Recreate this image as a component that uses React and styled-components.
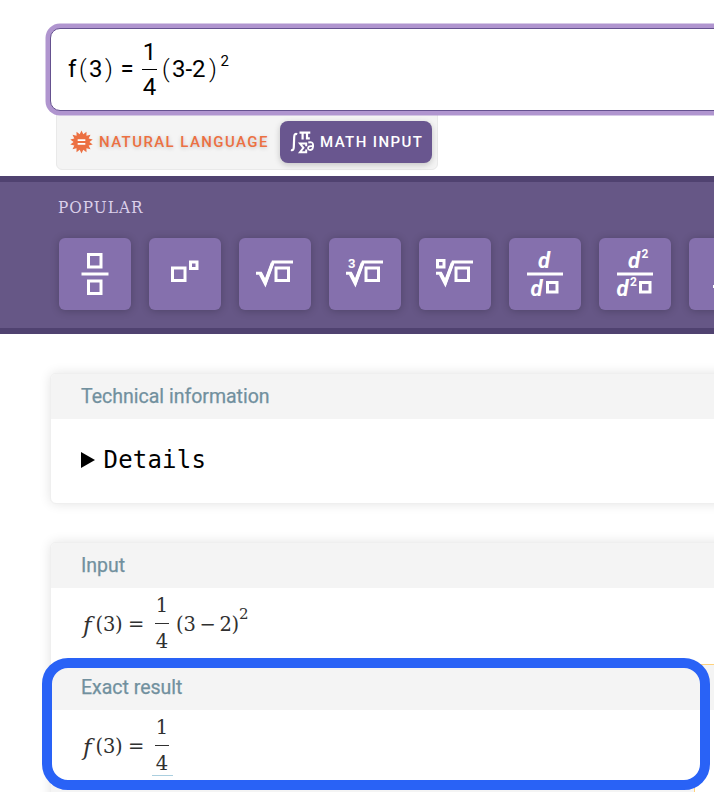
import React from "react";
import styled, { createGlobalStyle } from "styled-components";

const Global = createGlobalStyle`
  *{box-sizing:border-box}
  body{margin:0;background:#fff;overflow:hidden;font-family:Roboto,sans-serif}
`;
const Page = styled.main`
  width: 714px;
  height: 792px;
  overflow: hidden;
  position: relative;
  padding-top: 28px;
  background: #fff;
`;
const QueryField = styled.div`
  position: relative;
  z-index: 1;
  width: 700px;
  height: 83px;
  margin-left: 50px;
  padding-left: 17px;
  border: 1px solid #65518f;
  border-radius: 10px;
  background: #fff;
  box-shadow: 0 0 0 4.5px #b095cf;
  color: #000;
  font-size: 24px;
`;
const Formula = styled.div`
  display: flex;
  align-items: center;
  height: ${(p) => p.$h}px;
  line-height: 28px;
  white-space: nowrap;
`;
const Term = styled.span`
  flex: none;
  width: ${(p) => p.$w}px;
  padding-bottom: ${(p) => p.$rise || 0}px;
  font-weight: ${(p) => p.$weight || "inherit"};
`;
const FunctionName = styled(Term)`
  font-style: italic;
  font-size: 23px;
  font-family: "DejaVu Serif", serif;
`;
const Power = styled(Term)`
  font-size: ${(p) => p.$size}px;
`;
const Fraction = styled.span`
  flex: none;
  display: flex;
  flex-direction: column;
  align-items: center;
  width: ${(p) => p.$w}px;
  margin-right: ${(p) => p.$gap}px;
  line-height: ${(p) => p.$lh}px;
`;
const Bar = styled.i`
  width: 100%;
  height: 1px;
  background: currentColor;
`;
const Denominator = styled.span`
  display: flex;
  justify-content: center;
  width: 21px;
  height: 30px;
  line-height: 35px;
  border-bottom: 1px solid ${(p) => (p.$linked ? "#abcfdf" : "transparent")};
`;
const Numerator = styled.span`
  height: 26px;
  line-height: 18px;
`;
const ModeTabs = styled.nav`
  display: flex;
  width: 382px;
  height: 59px;
  margin-left: 56px;
  padding: 10px 5px 0 13px;
  border: 1px solid #e9e9e9;
  border-radius: 0 0 6px 6px;
  background: #f4f4f4;
`;
const Mode = styled.button`
  display: flex;
  align-items: center;
  flex: none;
  height: 42px;
  margin-top: -1px;
  padding: 0;
  border: 0;
  background: none;
  font: 500 15px Roboto, sans-serif;
  letter-spacing: 1.41px;
  color: #ec7042;
  white-space: nowrap;
  text-shadow: 0 1px 4px #0003;
  svg { flex: none; margin-right: 6px; }
`;
const ActiveMode = styled(Mode)`
  width: 152px;
  margin-left: auto;
  padding-left: 10px;
  border-radius: 8px;
  background: #69568f;
  color: #fff;
  box-shadow: 0 2px 6px #0003;
  text-shadow: none;
  svg { margin-right: 5px; }
`;
const Toolbar = styled.section`
  height: 158px;
  margin-top: 6px;
  padding: 15px 0 0 58px;
  border: solid #504270;
  border-width: 6px 0;
  background: #665786;
`;
const ToolbarTitle = styled.h2`
  height: 20px;
  margin: 0;
  color: #dbd0ea;
  font: 400 17px/21px "DejaVu Serif Condensed", "DejaVu Serif", serif;
  letter-spacing: 1px;
`;
const Keys = styled.div`
  display: flex;
  gap: 18px;
  margin: 21px 0 0 1px;
`;
const Key = styled.button`
  flex: none;
  width: 72px;
  height: 72px;
  padding: 0;
  border: 0;
  border-radius: 6px;
  background: #8570ad;
  box-shadow: 0 1px 8px #0000003b;
  color: #fff;
  svg { display: block; }
`;
const Card = styled.section`
  width: 720px;
  margin: ${(p) => p.$top}px 0 0 50px;
  border: 1px solid #efefef;
  border-radius: 6px;
  background: #fff;
  box-shadow: 0 0 12px #0000001c;
  overflow: hidden;
`;
const Heading = styled.h3`
  height: ${(p) => p.$h}px;
  margin: 0;
  padding-left: 30px;
  background: #f4f4f4;
  color: #71909e;
  font: 400 19.5px/46px Roboto, sans-serif;
  -webkit-text-stroke: 0.25px #71909e;
`;
const Details = styled.div`
  display: flex;
  align-items: center;
  height: 84px;
  padding: 0 0 2px 30px;
  font: 24px "DejaVu Sans Mono", monospace;
  letter-spacing: 0.2px;
  svg { margin-right: 8.5px; }
`;
const Result = styled.div`
  height: ${(p) => p.$h}px;
  padding-left: 32px;
  color: #303030;
  font: 19.5px/28px "DejaVu Serif", serif;
`;
const ResultHeading = styled(Heading)`
  border-top: 1px solid #ffd27c;
`;
const NextHeading = styled.div`
  width: 644px;
  height: 20px;
  border-right: 1px solid #ffd27c;
  background: #f4f4f4;
`;
const Highlight = styled.div`
  position: absolute;
  left: 42px;
  top: 658px;
  width: 668px;
  height: 132px;
  border: 10px solid #2962f6;
  border-radius: 26px;
`;

const Box = ({ x, y, s = 12, w = 3 }) => (
  <rect x={x + w / 2} y={y + w / 2} width={s - w} height={s - w} fill="none" stroke="#fff" strokeWidth={w} />
);
const Root = () => (
  <g fill="none" stroke="#fff">
    <path d="M17 35.3h4.8l4.7 9L34 24.1h20" strokeWidth="3" />
    <path d="M21.5 36l4.7 9L33.5 25" strokeWidth="3.6" />
  </g>
);
const Glyph = ({ x, y, size = 22, italic, children }) => (
  <text x={x} y={y} fill="#fff" fontFamily="Roboto" fontWeight="700" fontSize={size} fontStyle={italic ? "italic" : "normal"}>{children}</text>
);
const keys = [
  <><Box x={28} y={15} s={15.5} /><path d="M22.5 36h27" stroke="#fff" strokeWidth="3" /><Box x={28} y={41.5} s={15.5} /></>,
  <><Box x={22} y={28.5} s={15.5} /><Box x={40} y={22.5} s={9.5} /></>,
  <><Root /><Box x={35.5} y={28.5} s={15.5} /></>,
  <><Root /><Box x={35.5} y={28.5} s={15.5} /><Glyph x={19} y={30} size={13}>3</Glyph></>,
  <><Root /><Box x={35.5} y={28.5} s={15.5} /><Box x={17} y={21} s={9.5} /></>,
  <><Glyph x={29} y={30} italic>d</Glyph><path d="M18 36h36" stroke="#fff" strokeWidth="3" /><Glyph x={21.5} y={58} italic>d</Glyph><Box x={37} y={43} s={12.5} /></>,
  <><Glyph x={29} y={30} italic>d</Glyph><Glyph x={42.5} y={20} size={12}>2</Glyph><path d="M18 36h36" stroke="#fff" strokeWidth="3" /><Glyph x={17.5} y={58} italic>d</Glyph><Glyph x={31} y={48} size={12}>2</Glyph><Box x={40} y={43} s={12.5} /></>,
  <path d="M24 48.5h20" stroke="#fff" strokeWidth="3" />,
];
const burst = Array.from({ length: 28 }, (_, i) => {
  const a = (i * Math.PI) / 14 - Math.PI / 2;
  const r = i % 2 ? 8.3 : 12;
  return `${12 + r * Math.cos(a)},${12 + r * Math.sin(a)}`;
}).join(" ");

const Quarter = ({ gap = 0, linked }) => (
  <Fraction $w={14} $gap={gap}>
    <Numerator>1</Numerator><Bar /><Denominator $linked={linked}>4</Denominator>
  </Fraction>
);
const Lead = () => (
  <>
    <FunctionName $w={12.5}>f</FunctionName><Term $w={7.5}>(</Term><Term $w={12}>3</Term><Term $w={13}>)</Term><Term $w={27}>=</Term>
  </>
);

export default function App() {
  return (
    <Page>
      <Global />
      <QueryField>
        <Formula $h={80}>
          <Term $w={11}>f</Term><Term $w={10} $weight={300}>(</Term><Term $w={16}>3</Term><Term $w={15.5} $weight={300}>)</Term><Term $w={21.5}>=</Term>
          <Fraction $w={15} $gap={5} $lh={34}><span>1</span><Bar /><span>4</span></Fraction>
          <Term $w={10} $weight={300}>(</Term><Term $w={37}>3-2</Term><Term $w={11.5} $weight={300}>)</Term>
          <Power $w={12} $size={15} $rise={16}>2</Power>
        </Formula>
      </QueryField>
      <ModeTabs>
        <Mode>
          <svg width="23" height="24" viewBox="0 0 24 24">
            <polygon points={burst} fill="#ec7042" />
            <path d="M8 10h8M8 14h8" stroke="#fff" strokeWidth="1.7" />
          </svg>
          NATURAL LANGUAGE
        </Mode>
        <ActiveMode>
          <svg width="25" height="26" viewBox="0 0 25 26" fill="none" stroke="#fff" strokeWidth="2.2">
            <path d="M7.2 5.2Q4.4 4 4.2 8L3.8 18Q3.7 22 1 21" />
            <path d="M9.5 3.6H20.3M12.6 4v6.5M17 4v5.4h2.8" />
            <path d="M16.2 17.2v-2.7H10l3.4 4.3L10 23.2h6.2v-2.7" strokeWidth="2" />
            <path d="M18.3 13.5q4.6-1.2 4.8 2.5 .2 5-2.8 5-2.4-.1-2.2-2.1.5-2.2 4.6-1.6" strokeWidth="1.9" />
          </svg>
          MATH INPUT
        </ActiveMode>
      </ModeTabs>
      <Toolbar>
        <ToolbarTitle>POPULAR</ToolbarTitle>
        <Keys>
          {keys.map((drawing, i) => <Key key={i}><svg width="72" height="72">{drawing}</svg></Key>)}
        </Keys>
      </Toolbar>
      <Card $top={39}>
        <Heading $h={45}>Technical information</Heading>
        <Details>
          <svg width="14" height="16"><path d="M0 0v16l14-8z" /></svg>Details
        </Details>
      </Card>
      <Card $top={38}>
        <Heading $h={45}>Input</Heading>
        <Result $h={76}>
          <Formula $h={74}>
            <Lead /><Quarter gap={7} />
            <Term $w={7.5}>(</Term><Term $w={16}>3</Term><Term $w={20}>−</Term><Term $w={12}>2</Term><Term $w={7.5}>)</Term>
            <Power $w={10} $size={15} $rise={22}>2</Power>
          </Formula>
        </Result>
        <ResultHeading $h={46}>Exact result</ResultHeading>
        <Result $h={75}>
          <Formula $h={74}>
            <Lead /><Quarter linked />
          </Formula>
        </Result>
        <NextHeading />
      </Card>
      <Highlight />
    </Page>
  );
}
